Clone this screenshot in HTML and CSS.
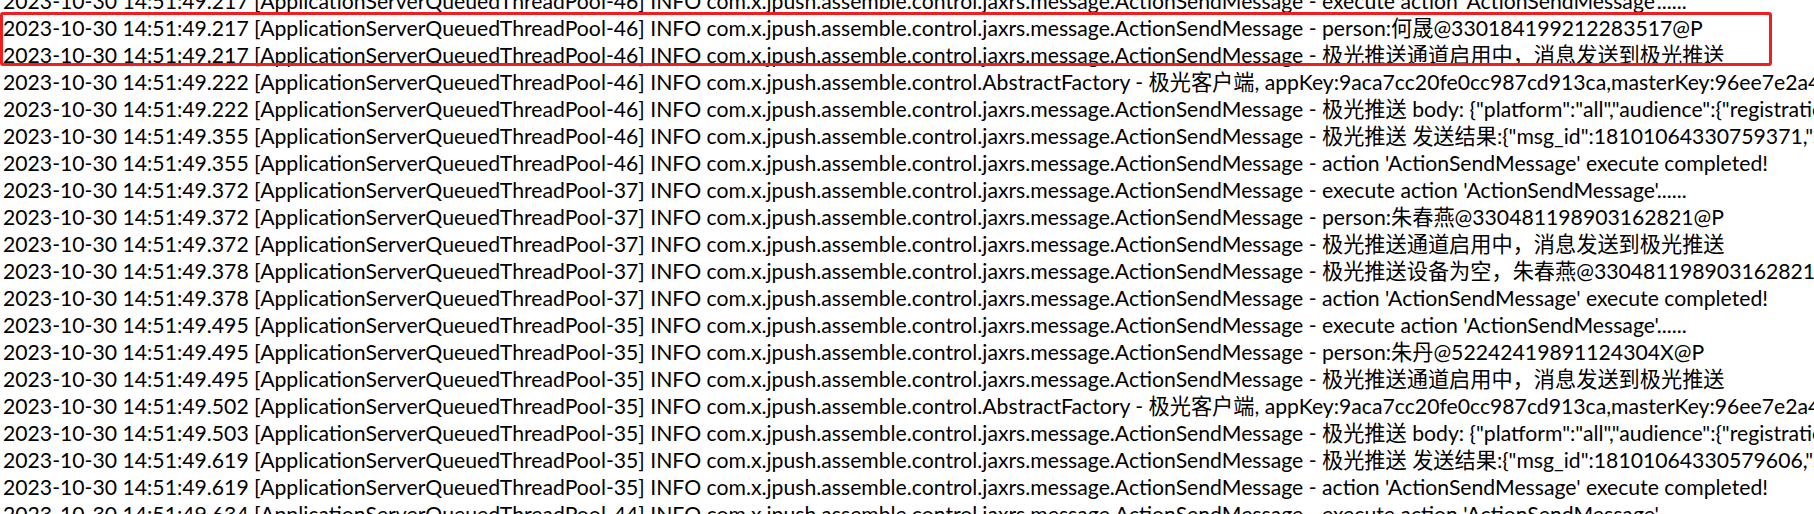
FILE: index.html
```html
<!DOCTYPE html>
<html lang="zh-CN">
<head>
    <meta charset="UTF-8">
    <title>log</title>
    <link rel="stylesheet" href="styles.css">
</head>
<body>
    <div class="log">
        <div class="line">2023-10-30 14:51:49.217 [ApplicationServerQueuedThreadPool-46] INFO com.x.jpush.assemble.control.jaxrs.message.ActionSendMessage - execute action 'ActionSendMessage'......</div>
        <div class="mark">
            <div class="line">2023-10-30 14:51:49.217 [ApplicationServerQueuedThreadPool-46] INFO com.x.jpush.assemble.control.jaxrs.message.ActionSendMessage - person:何晟@330184199212283517@P</div>
            <div class="line">2023-10-30 14:51:49.217 [ApplicationServerQueuedThreadPool-46] INFO com.x.jpush.assemble.control.jaxrs.message.ActionSendMessage - 极光推送通道启用中，消息发送到极光推送</div>
        </div>
        <div class="line">2023-10-30 14:51:49.222 [ApplicationServerQueuedThreadPool-46] INFO com.x.jpush.assemble.control.AbstractFactory - 极光客户端, appKey:9aca7cc20fe0cc987cd913ca,masterKey:96ee7e2a4c1b0d3f5e8a7c21</div>
        <div class="line">2023-10-30 14:51:49.222 [ApplicationServerQueuedThreadPool-46] INFO com.x.jpush.assemble.control.jaxrs.message.ActionSendMessage - 极光推送 body: {"platform":"all","audience":{"registration_id":["1a0018970a8b2c3d"]}}</div>
        <div class="line">2023-10-30 14:51:49.355 [ApplicationServerQueuedThreadPool-46] INFO com.x.jpush.assemble.control.jaxrs.message.ActionSendMessage - 极光推送 发送结果:{"msg_id":18101064330759371,"sendno":0}</div>
        <div class="line">2023-10-30 14:51:49.355 [ApplicationServerQueuedThreadPool-46] INFO com.x.jpush.assemble.control.jaxrs.message.ActionSendMessage - action 'ActionSendMessage' execute completed!</div>
        <div class="line">2023-10-30 14:51:49.372 [ApplicationServerQueuedThreadPool-37] INFO com.x.jpush.assemble.control.jaxrs.message.ActionSendMessage - execute action 'ActionSendMessage'......</div>
        <div class="line">2023-10-30 14:51:49.372 [ApplicationServerQueuedThreadPool-37] INFO com.x.jpush.assemble.control.jaxrs.message.ActionSendMessage - person:朱春燕@330481198903162821@P</div>
        <div class="line">2023-10-30 14:51:49.372 [ApplicationServerQueuedThreadPool-37] INFO com.x.jpush.assemble.control.jaxrs.message.ActionSendMessage - 极光推送通道启用中，消息发送到极光推送</div>
        <div class="line">2023-10-30 14:51:49.378 [ApplicationServerQueuedThreadPool-37] INFO com.x.jpush.assemble.control.jaxrs.message.ActionSendMessage - 极光推送设备为空，朱春燕@330481198903162821@P</div>
        <div class="line">2023-10-30 14:51:49.378 [ApplicationServerQueuedThreadPool-37] INFO com.x.jpush.assemble.control.jaxrs.message.ActionSendMessage - action 'ActionSendMessage' execute completed!</div>
        <div class="line">2023-10-30 14:51:49.495 [ApplicationServerQueuedThreadPool-35] INFO com.x.jpush.assemble.control.jaxrs.message.ActionSendMessage - execute action 'ActionSendMessage'......</div>
        <div class="line">2023-10-30 14:51:49.495 [ApplicationServerQueuedThreadPool-35] INFO com.x.jpush.assemble.control.jaxrs.message.ActionSendMessage - person:朱丹@52242419891124304X@P</div>
        <div class="line">2023-10-30 14:51:49.495 [ApplicationServerQueuedThreadPool-35] INFO com.x.jpush.assemble.control.jaxrs.message.ActionSendMessage - 极光推送通道启用中，消息发送到极光推送</div>
        <div class="line">2023-10-30 14:51:49.502 [ApplicationServerQueuedThreadPool-35] INFO com.x.jpush.assemble.control.AbstractFactory - 极光客户端, appKey:9aca7cc20fe0cc987cd913ca,masterKey:96ee7e2a4c1b0d3f5e8a7c21</div>
        <div class="line">2023-10-30 14:51:49.503 [ApplicationServerQueuedThreadPool-35] INFO com.x.jpush.assemble.control.jaxrs.message.ActionSendMessage - 极光推送 body: {"platform":"all","audience":{"registration_id":["1a0018970a8b2c3d"]}}</div>
        <div class="line">2023-10-30 14:51:49.619 [ApplicationServerQueuedThreadPool-35] INFO com.x.jpush.assemble.control.jaxrs.message.ActionSendMessage - 极光推送 发送结果:{"msg_id":18101064330579606,"sendno":0}</div>
        <div class="line">2023-10-30 14:51:49.619 [ApplicationServerQueuedThreadPool-35] INFO com.x.jpush.assemble.control.jaxrs.message.ActionSendMessage - action 'ActionSendMessage' execute completed!</div>
        <div class="line">2023-10-30 14:51:49.634 [ApplicationServerQueuedThreadPool-44] INFO com.x.jpush.assemble.control.jaxrs.message.ActionSendMessage - execute action 'ActionSendMessage'......</div>
    </div>
</body>
</html>
```

FILE: styles.css
```css
html, body {
    margin: 0;
    background: #ffffff;
    overflow: hidden;
}
.log {
    margin-top: -12px;
    font-family: Lato, "Noto Sans CJK SC", sans-serif;
    font-size: 21.2px;
    line-height: 27px;
    color: #000000;
}
.line {
    padding-left: 3px;
    white-space: nowrap;
}
/* red highlight box drawn over the two selected lines */
.mark {
    position: relative;
}
.mark::after {
    content: "";
    position: absolute;
    left: 0;
    top: -3px;
    width: 1772px;
    height: 54px;
    box-sizing: border-box;
    border: 3px solid #f01e1e;
    border-radius: 3px;
    pointer-events: none;
}
```
